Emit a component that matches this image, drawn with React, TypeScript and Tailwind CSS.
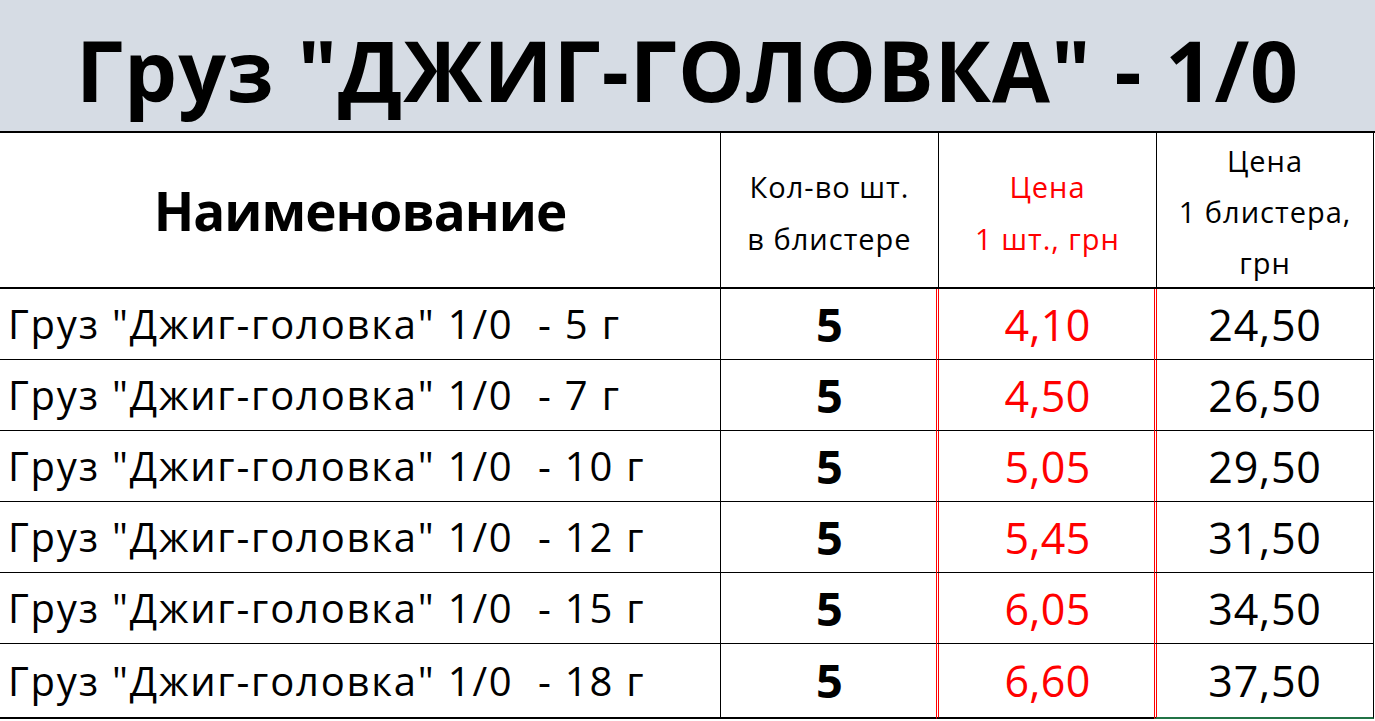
import React from "react";

const rows = [
  { name: 'Груз "Джиг-головка" 1/0  - 5 г', qty: "5", p1: "4,10", pb: "24,50" },
  { name: 'Груз "Джиг-головка" 1/0  - 7 г', qty: "5", p1: "4,50", pb: "26,50" },
  { name: 'Груз "Джиг-головка" 1/0  - 10 г', qty: "5", p1: "5,05", pb: "29,50" },
  { name: 'Груз "Джиг-головка" 1/0  - 12 г', qty: "5", p1: "5,45", pb: "31,50" },
  { name: 'Груз "Джиг-головка" 1/0  - 15 г', qty: "5", p1: "6,05", pb: "34,50" },
  { name: 'Груз "Джиг-головка" 1/0  - 18 г', qty: "5", p1: "6,60", pb: "37,50" },
];

export default function App() {
  return (
    <div
      className="w-[1375px] h-[721px] bg-white text-black overflow-hidden"
      style={{ fontFamily: '"Open Sans", "Noto Sans", sans-serif' }}
    >
      <div className="h-[133px] bg-[#d6dce4] border-b-2 border-black flex items-center justify-center pt-[8px]">
        <span className="font-bold text-[84px] leading-none tracking-[1px]">Груз "ДЖИГ-ГОЛОВКА" - 1/0</span>
      </div>
      <div className="grid grid-cols-[720px_218px_218px_219px] h-[156px] border-b-2 border-black">
        <div className="flex items-center justify-center">
          <span className="font-bold text-[53px] leading-none tracking-[-1px]">Наименование</span>
        </div>
        <div className="border-l border-black flex flex-col items-center justify-center text-[29px] leading-[52px] tracking-[1px] pt-[4px]">
          <span>Кол-во шт.</span>
          <span>в блистере</span>
        </div>
        <div className="border-l border-black flex flex-col items-center justify-center text-[29px] leading-[52px] tracking-[1px] text-[#ff0000] pt-[4px]">
          <span>Цена</span>
          <span>1 шт., грн</span>
        </div>
        <div className="border-l border-r border-black flex flex-col items-center justify-center text-[29px] leading-[51px] tracking-[1px] mr-[1px] pt-[2px]">
          <span>Цена</span>
          <span>1 блистера,</span>
          <span>грн</span>
        </div>
      </div>
      {rows.map((r, i) => {
        const last = i === rows.length - 1;
        return (
          <div
            key={i}
            className={
              "grid grid-cols-[720px_218px_218px_219px] " +
              (last ? "h-[75px]" : "h-[71px]")
            }
          >
            <div
              className={
                "flex items-center pl-[8px] " +
                (last ? "border-b-2 border-black" : "border-b border-black")
              }
            >
              <span className="text-[40px] leading-none whitespace-pre tracking-[1.8px]">{r.name}</span>
            </div>
            <div
              className={
                "border-l border-l-black flex items-center justify-center " +
                (last ? "border-b-2 border-b-black" : "border-b border-b-black")
              }
            >
              <span className="font-bold text-[47px] leading-none">{r.qty}</span>
            </div>
            <div
              className={
                "border-l-[3px] border-double border-l-[#ff0000] -ml-[2px] flex items-center justify-center text-[#ff0000] " +
                (last ? "border-b-2 border-b-black" : "border-b border-b-black")
              }
              style={{ borderBottomStyle: "solid" }}
            >
              <span className="text-[43px] leading-none tracking-[0.3px]">{r.p1}</span>
            </div>
            <div
              className={
                "border-l-[3px] border-double border-l-[#ff0000] -ml-[2px] border-r border-r-black mr-[1px] flex items-center justify-center " +
                (last ? "border-b-2 border-b-[#217346]" : "border-b border-b-black")
              }
              style={{ borderBottomStyle: "solid", borderRightStyle: "solid" }}
            >
              <span className="text-[43px] leading-none tracking-[0.8px]">{r.pb}</span>
            </div>
          </div>
        );
      })}
    </div>
  );
}
